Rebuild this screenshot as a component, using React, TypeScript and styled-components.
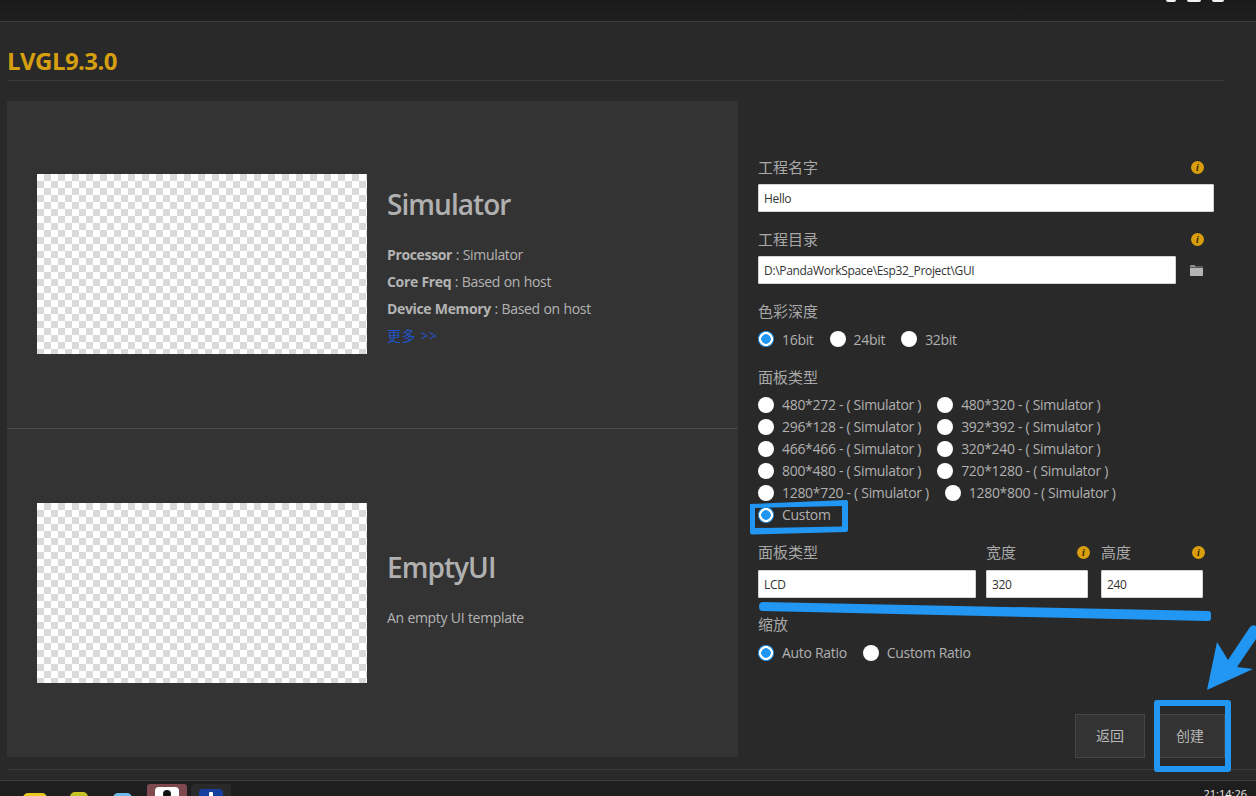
import React from "react";
import styled, { createGlobalStyle } from "styled-components";

const Global = createGlobalStyle`
  html, body { margin: 0; padding: 0; background: #292929; }
  * { box-sizing: border-box; }
  body { font-family: "Open Sans", "Noto Sans CJK SC", sans-serif; }
`;

const Page = styled.div`
  position: relative;
  width: 1256px;
  height: 796px;
  overflow: hidden;
  display: flex;
  flex-direction: column;
  background: #292929;
`;
const TopBar = styled.div`
  height: 22px;
  flex: none;
  display: flex;
  justify-content: flex-end;
  align-items: flex-start;
  padding-right: 32px;
  gap: 11px;
  background: linear-gradient(#1a1a1a, #1f1f1f);
  border-bottom: 1px solid #3e3e3e;
`;
const WindowMark = styled.span<{ $w: number }>`
  width: ${(p) => p.$w}px;
  height: 2px;
  background: #f2f2f2;
  border-radius: 0 0 2px 2px;
`;
const Main = styled.main`
  flex: 1;
  padding: 0 0 0 7px;
`;
const Header = styled.header`
  height: 59px;
  margin-right: 32px;
  margin-bottom: 20px;
  display: flex;
  align-items: flex-end;
  padding-bottom: 3px;
  border-bottom: 1px solid #3a3a3a;
`;
const Title = styled.h1`
  margin: 0;
  font-size: 24px;
  line-height: 33px;
  font-weight: 700;
  color: #d59f0f;
  letter-spacing: -0.55px;
`;
const Columns = styled.div`
  display: flex;
  height: 657px;
`;
const TemplatePanel = styled.section`
  width: 731px;
  height: 656px;
  flex: none;
  background: #333333;
  display: flex;
  flex-direction: column;
`;
const TemplateRow = styled.article<{ $divider?: boolean }>`
  height: 328px;
  display: flex;
  align-items: center;
  padding-left: 30px;
  padding-bottom: ${(p) => (p.$divider ? 1 : 0)}px;
  gap: 20px;
  border-bottom: ${(p) => (p.$divider ? "1px solid #4a4a4a" : "none")};
`;
const Checker = styled.div`
  width: 330px;
  height: 180px;
  flex: none;
  background: repeating-conic-gradient(#dadada 0 25%, #ffffff 0 50%) 0 0 / 14px 14px;
`;
const Info = styled.div<{ $top?: number; $pad?: number }>`
  display: flex;
  flex-direction: column;
  padding-top: ${(p) => p.$top ?? 0}px;
  padding-bottom: ${(p) => p.$pad ?? 0}px;
  color: #b4b4b4;
`;
const TemplateName = styled.h2<{ $track: number }>`
  margin: 0 0 17px;
  font-size: 28px;
  line-height: 40px;
  font-weight: 600;
  color: #b0b0b0;
  letter-spacing: ${(p) => p.$track}px;
`;
const Spec = styled.div`
  font-size: 14px;
  line-height: 27px;
  letter-spacing: -0.32px;
  word-spacing: 0.3px;
  b { font-weight: 700; letter-spacing: -0.35px; }
`;
const More = styled.a`
  font-size: 14px;
  line-height: 20px;
  margin-top: 4px;
  letter-spacing: 0.6px;
  color: #2255c8;
`;
const Form = styled.aside`
  width: 467px;
  margin-left: 20px;
  padding-top: 56px;
  display: flex;
  flex-direction: column;
`;
const Field = styled.div<{ $gap?: number }>`
  width: 456px;
  margin-bottom: ${(p) => p.$gap ?? 17}px;
`;
const LabelRow = styled.div<{ $gap?: number }>`
  display: flex;
  justify-content: space-between;
  align-items: center;
  height: 20px;
  margin-bottom: ${(p) => p.$gap ?? 7}px;
  padding-right: ${(p) => (p.$gap === 8 ? 0 : 10)}px;
`;
const Label = styled.label`
  font-size: 15px;
  line-height: 20px;
  color: #a8a8a8;
`;
const InfoIcon = styled.span`
  width: 13px;
  height: 13px;
  border-radius: 50%;
  background: #d99e0b;
  display: flex;
  align-items: center;
  justify-content: center;
  font: italic 700 10px/13px "Liberation Serif", serif;
  color: #2e2304;
`;
const TextBox = styled.div<{ $w?: number }>`
  width: ${(p) => (p.$w ? `${p.$w}px` : "100%")};
  height: 28px;
  padding-left: 5px;
  background: #ffffff;
  border: 1px solid #d4d4d4;
  border-radius: 1px;
  font-size: 12px;
  line-height: 27px;
  letter-spacing: -0.32px;
  color: #333333;
  white-space: nowrap;
`;
const PathRow = styled.div`
  display: flex;
  align-items: center;
  gap: 14px;
`;
const RadioGrid = styled.div`
  display: flex;
  flex-direction: column;
`;
const RadioRow = styled.div`
  display: flex;
  height: 22px;
  align-items: center;
  gap: 16px;
`;
const RadioItem = styled.span`
  display: flex;
  align-items: center;
  gap: 8px;
  font-size: 14px;
  letter-spacing: -0.31px;
  color: #b0b0b0;
  white-space: nowrap;
`;
const RadioText = styled.span<{ $flat?: boolean }>`
  margin-bottom: ${(p) => (p.$flat ? 0 : 2)}px;
`;
const RadioDot = styled.span<{ $on?: boolean }>`
  width: 16px;
  height: 16px;
  flex: none;
  border-radius: 50%;
  background: ${(p) =>
    p.$on
      ? "radial-gradient(circle, #2196f3 0 4.5px, #ffffff 5px 6.7px, #2196f3 7.2px)"
      : "#ffffff"};
`;
const DimRow = styled.div`
  display: flex;
  gap: 10px;
`;
const DimCell = styled.div<{ $w: number; $shift?: number }>`
  width: ${(p) => p.$w}px;
  margin-left: ${(p) => p.$shift ?? 0}px;
`;
const DimIcon = styled(InfoIcon)`
  margin-right: -2px;
`;
const Buttons = styled.div`
  margin-top: auto;
  display: flex;
  justify-content: flex-end;
  gap: 10px;
`;
const ActionButton = styled.button`
  width: 70px;
  height: 44px;
  background: #333333;
  border: 1px solid #454545;
  color: #b8b8b8;
  font: 14px "Open Sans", "Noto Sans CJK SC", sans-serif;
  padding: 0 0 3px;
`;
const FootGap = styled.div`
  height: 12px;
  flex: none;
  border-bottom: 1px solid #3b3b3b;
`;
const Taskbar = styled.footer`
  height: 16px;
  flex: none;
  margin-top: 10px;
  display: flex;
  justify-content: space-between;
  background: #1e1e1e;
  border-top: 1px solid #3e3e3e;
  overflow: hidden;
`;
const Apps = styled.div`
  display: flex;
  align-items: flex-start;
  padding-left: 147px;
  gap: 4px;
  position: relative;
`;
const AppButton = styled.div<{ $bg: string }>`
  width: 40px;
  height: 20px;
  margin-top: 3px;
  border-radius: 3px 3px 0 0;
  background: ${(p) => p.$bg};
  display: flex;
  justify-content: center;
`;
const AppGlyph = styled.span<{ $bg: string; $top: number }>`
  width: 24px;
  height: 24px;
  margin-top: ${(p) => p.$top}px;
  border-radius: 4px;
  background: ${(p) => p.$bg};
  display: flex;
  justify-content: center;
`;
const GlyphMark = styled.span<{ $bg: string; $w: number; $round?: boolean }>`
  width: ${(p) => p.$w}px;
  height: 8px;
  margin-top: 3px;
  border-radius: ${(p) => (p.$round ? "50%" : "1px")};
  background: ${(p) => p.$bg};
`;
const Tray = styled.div<{ $bg: string; $x: number; $w: number; $top: number }>`
  position: absolute;
  left: ${(p) => p.$x}px;
  top: ${(p) => p.$top}px;
  width: ${(p) => p.$w}px;
  height: 20px;
  border-radius: 5px 5px 0 0;
  background: ${(p) => p.$bg};
`;
const Clock = styled.time`
  font-size: 11px;
  line-height: 14px;
  margin-top: 6px;
  margin-right: 9px;
  color: #eeeeee;
`;
const Annotation = styled.svg`
  position: absolute;
  inset: 0;
  width: 1256px;
  height: 796px;
  pointer-events: none;
`;

const row1 = [
  ["480*272 - ( Simulator )", "480*320 - ( Simulator )"],
  ["296*128 - ( Simulator )", "392*392 - ( Simulator )"],
  ["466*466 - ( Simulator )", "320*240 - ( Simulator )"],
  ["800*480 - ( Simulator )", "720*1280 - ( Simulator )"],
  ["1280*720 - ( Simulator )", "1280*800 - ( Simulator )"],
];

const Radio = ({ on, flat, children }: { on?: boolean; flat?: boolean; children: React.ReactNode }) => (
  <RadioItem>
    <RadioDot $on={on} />
    <RadioText $flat={flat}>{children}</RadioText>
  </RadioItem>
);

export default function App() {
  return (
    <Page>
      <Global />
      <TopBar>
        <WindowMark $w={10} />
        <WindowMark $w={14} />
        <WindowMark $w={12} />
      </TopBar>
      <Main>
        <Header>
          <Title>LVGL9.3.0</Title>
        </Header>
        <Columns>
          <TemplatePanel>
            <TemplateRow $divider>
              <Checker />
              <Info $top={2}>
                <TemplateName $track={-0.95}>Simulator</TemplateName>
                <Spec><b>Processor</b> : Simulator</Spec>
                <Spec><b>Core Freq</b> : Based on host</Spec>
                <Spec><b>Device Memory</b> : Based on host</Spec>
                <More>更多 &gt;&gt;</More>
              </Info>
            </TemplateRow>
            <TemplateRow>
              <Checker />
              <Info $pad={8}>
                <TemplateName $track={-0.95}>EmptyUI</TemplateName>
                <Spec>An empty UI template</Spec>
              </Info>
            </TemplateRow>
          </TemplatePanel>
          <Form>
            <Field>
              <LabelRow>
                <Label>工程名字</Label>
                <InfoIcon>i</InfoIcon>
              </LabelRow>
              <TextBox>Hello</TextBox>
            </Field>
            <Field>
              <LabelRow>
                <Label>工程目录</Label>
                <InfoIcon>i</InfoIcon>
              </LabelRow>
              <PathRow>
                <TextBox $w={418}>D:\PandaWorkSpace\Esp32_Project\GUI</TextBox>
                <svg width="13" height="11" viewBox="0 0 13 11">
                  <path d="M0 1.2C0 .5.5 0 1.2 0h3.4l1.3 1.4H13v1H0z" fill="#8e8e8e" />
                  <path d="M0 3h13v7c0 .6-.4 1-1 1H1c-.6 0-1-.4-1-1z" fill="#b4b4b4" />
                </svg>
              </PathRow>
            </Field>
            <Field>
              <LabelRow>
                <Label>色彩深度</Label>
              </LabelRow>
              <RadioRow>
                <Radio on flat>16bit</Radio>
                <Radio flat>24bit</Radio>
                <Radio flat>32bit</Radio>
              </RadioRow>
            </Field>
            <Field $gap={16}>
              <LabelRow>
                <Label>面板类型</Label>
              </LabelRow>
              <RadioGrid>
                {row1.map(([a, b]) => (
                  <RadioRow key={a}>
                    <Radio>{a}</Radio>
                    <Radio>{b}</Radio>
                  </RadioRow>
                ))}
                <RadioRow>
                  <Radio on>Custom</Radio>
                </RadioRow>
              </RadioGrid>
            </Field>
            <Field $gap={16}>
              <DimRow>
                <DimCell $w={218}>
                  <LabelRow $gap={8}>
                    <Label>面板类型</Label>
                  </LabelRow>
                  <TextBox>LCD</TextBox>
                </DimCell>
                <DimCell $w={102}>
                  <LabelRow $gap={8}>
                    <Label>宽度</Label>
                    <DimIcon>i</DimIcon>
                  </LabelRow>
                  <TextBox>320</TextBox>
                </DimCell>
                <DimCell $w={102} $shift={3}>
                  <LabelRow $gap={8}>
                    <Label>高度</Label>
                    <DimIcon>i</DimIcon>
                  </LabelRow>
                  <TextBox>240</TextBox>
                </DimCell>
              </DimRow>
            </Field>
            <Field $gap={0}>
              <LabelRow $gap={8}>
                <Label>缩放</Label>
              </LabelRow>
              <RadioRow>
                <Radio on>Auto Ratio</Radio>
                <Radio>Custom Ratio</Radio>
              </RadioRow>
            </Field>
            <Buttons>
              <ActionButton>返回</ActionButton>
              <ActionButton>创建</ActionButton>
            </Buttons>
          </Form>
        </Columns>
        <FootGap />
      </Main>
      <Taskbar>
        <Apps>
          <Tray $bg="#e9c91c" $x={23} $w={24} $top={12} />
          <Tray $bg="linear-gradient(#d6c81e, #3aa84a)" $x={70} $w={18} $top={11} />
          <Tray $bg="#6cbbe8" $x={113} $w={19} $top={12} />
          <AppButton $bg="#7e4a50">
            <AppGlyph $bg="#ffffff" $top={3}>
              <GlyphMark $bg="#111111" $w={8} $round />
            </AppGlyph>
          </AppButton>
          <AppButton $bg="#2a2a2a">
            <AppGlyph $bg="#1540a0" $top={5}>
              <GlyphMark $bg="#ffffff" $w={4} />
            </AppGlyph>
          </AppButton>
        </Apps>
        <Clock>21:14:26</Clock>
      </Taskbar>
      <Annotation viewBox="0 0 1256 796">
        <path
          d="M750 504 L846 500 Q848 500 848 502 L848 530 Q848 532 846 532 L752 534.5 Q750 534.5 750 532.5 Z M755 508 L755 528 L842 526.5 L842 506 Z"
          fill="#2196f3"
          fillRule="evenodd"
        />
        <path
          d="M763 602 L1208 611 Q1211 611 1211 614 L1211 618 Q1211 621 1208 621 L763 611 Q759 611 759 606.5 Q759 602 763 602 Z"
          fill="#2196f3"
        />
        <path
          d="M1207 690 L1217 642 L1228 660 L1250 627 Q1253 624 1256 626 L1256 639 L1237 667 L1253 669 Z"
          fill="#2196f3"
        />
        <path
          d="M1157 700 H1228 Q1231 700 1231 703 V769 Q1231 772 1228 772 H1157 Q1154 772 1154 769 V703 Q1154 700 1157 700 Z M1160 706 V766 H1225 V706 Z"
          fill="#2196f3"
          fillRule="evenodd"
        />
      </Annotation>
    </Page>
  );
}
